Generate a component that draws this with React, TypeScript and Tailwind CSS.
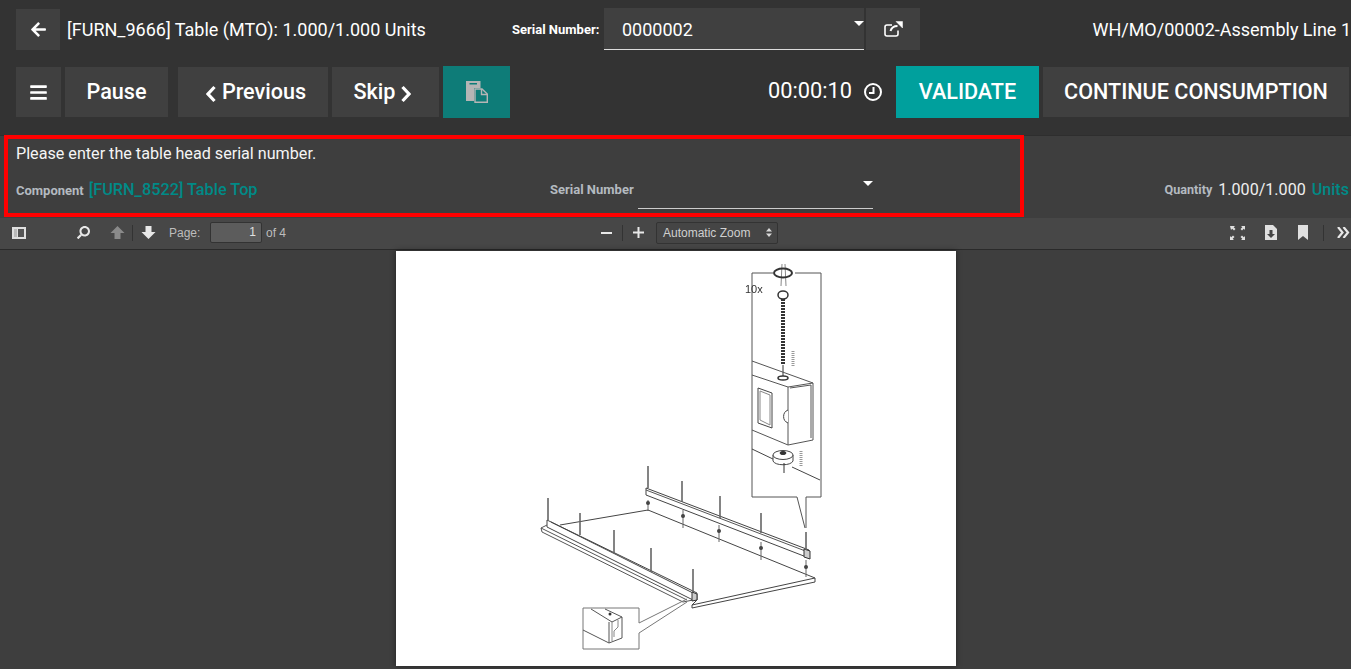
import { FaArrowLeft, FaBars, FaSearch } from "react-icons/fa";

const btn = "flex items-center justify-center bg-[#404040] text-white text-[21.6px] font-medium h-[50px]";

function Caret() {
  return <span className="block w-0 h-0 border-x-[5px] border-x-transparent border-t-[5px] border-t-white" />;
}

function Chevron({ right }: { right?: boolean }) {
  return (
    <svg width="11" height="18" viewBox="0 0 11 18" fill="none" stroke="white" strokeWidth="3.2" className="mt-[3px]">
      <path d={right ? "M2.500 2L9 9 2.500 16" : "M8.500 2L2 9 8.500 16"} />
    </svg>
  );
}

function ManualDrawing() {
  return (
    <svg viewBox="396 251 560 415" className="w-[560px] h-[415px] block blur-[0.3px]" fill="none" stroke="#333" strokeWidth="1">
      {/* detail box */}
      <path d="M773 273H752V497H797L805 528M795 273H821V497H806V528" stroke="#555" />
      <text x="745" y="293" fontSize="11" fill="#333" stroke="none" fontFamily="Liberation Sans, sans-serif">10x</text>
      <path d="M782 264L781 286M785 264L786 286" stroke="#888" />
      <ellipse cx="783" cy="273" rx="9" ry="4.500" strokeWidth="2" />
      <ellipse cx="783" cy="295" rx="5" ry="4" strokeWidth="1.500" />
      <path d="M783 299V365" stroke="#333" strokeWidth="4" strokeDasharray="2 1" />
      <path d="M783 365V376" />
      <ellipse cx="783" cy="378" rx="5" ry="2" strokeWidth="1.500" />
      {/* tube section */}
      <path d="M752 361L813 383V440L788 445V387L752 375M788 387L813 383M752 430L788 445M790 388L811 385V438" stroke="#555" strokeWidth="1" />
      <path d="M788 410A7 7 0 0 0 788 423" fill="#fff" stroke="#444" strokeWidth="1" />
      <path d="M758 388L772 393V428L758 423Z" stroke="#444" strokeWidth="1" />
      <path d="M760 391L770 395V425L760 420Z" stroke="#888" />
      <path d="M752 449L775 460M792 467L820 480" stroke="#444" />
      <path d="M773 455V461C775 466 791 466 793 461V455" fill="#fff" stroke="#444" />
      <ellipse cx="783" cy="455" rx="10" ry="4.500" fill="#fff" stroke="#444" />
      <ellipse cx="783" cy="453" rx="3" ry="1.500" fill="#333" />
      <path d="M784 463V473" />
      <path d="M793 351V366M801 451V466" stroke="#999" strokeWidth="3" strokeDasharray="1 1" />
      {/* table top */}
      <path d="M560 525L648 510 815 578V582L692 608V605L815 578M692 605L697 600M648 510V511" stroke="#444" />
      {/* far rail */}
      <path d="M646 488L809 550V558L646 495Z" stroke="#444" strokeWidth="1" />
      <path d="M646 490L808 552" stroke="#555" strokeWidth="1" />
      <path d="M804 549L810 551V559L804 557Z" fill="#ccc" />
      {/* near rail */}
      <path d="M547 520L697 593V600L693 600 547 527ZM551 522L695 594" stroke="#444" strokeWidth="1" />
      <path d="M547 525L541 528 542 532 683 602 693 600M541 528L687 600" stroke="#555" />
      <path d="M692 592L697 594V600L692 601Z" fill="#ccc" />
      {/* bolts */}
      <g stroke="#666" strokeWidth="1.600">
        <path d="M548 498V520M580 513V535M614 530V553M651 548V572M693 569V592" />
        <path d="M648 466V488M682 481V502M720 496V518M761 513V533M806 532V550" />
        <path d="M648 500V511M683 510V528M719 525V542M761 542V560M806 560V577" strokeWidth="1" />
      </g>
      <g fill="#444" stroke="none">
        <circle cx="648" cy="503" r="2" />
        <circle cx="683" cy="516" r="2" />
        <circle cx="719" cy="531" r="2" />
        <circle cx="761" cy="548" r="2" />
        <circle cx="806" cy="567" r="2" />
      </g>
      {/* corner detail */}
      <path d="M639 623V608H583V649H639V633L687 602M639 623L687 599" stroke="#777" />
      <path d="M591 609L612 622 622 617V638L609 643V622M605 609L622 617M583 630L609 643" stroke="#555" />
      <path d="M612 622V641M618 620V627L614 631V637" stroke="#888" />
      <circle cx="610" cy="614" r="1.500" fill="#333" stroke="none" />
    </svg>
  );
}

export default function App() {
  return (
    <div className="w-[1351px] h-[669px] overflow-hidden flex flex-col bg-[#333333] text-white font-['Roboto',sans-serif] relative">
      <header className="h-[135px] shrink-0 pl-4 pr-[2px] pt-2">
        <div className="h-[42px] flex items-center">
          <button className="w-[44px] h-[41px] bg-[#404040] flex items-center justify-center">
            <FaArrowLeft size={17} />
          </button>
          <span className="ml-[7px] pt-[1px] text-[18px] w-[445px] whitespace-nowrap">[FURN_9666] Table (MTO): 1.000/1.000 Units</span>
          <span className="pt-[1px] text-[13px] font-bold w-[92px] whitespace-nowrap">Serial Number:</span>
          <div className="relative w-[260px] h-[42px] bg-[#404040] border-b border-[#dddddd] pl-[18px] pt-[1px] flex items-center text-[18px]">
            0000002
            <span className="absolute right-0 top-[13px]"><Caret /></span>
          </div>
          <button className="ml-[2px] w-[54px] h-[42px] bg-[#404040] flex items-center justify-center">
            <svg width="19" height="16" viewBox="0 0 19 16" fill="none" stroke="white">
              <path d="M14 9.500V13a2 2 0 0 1-2 2H3a2 2 0 0 1-2-2V6a2 2 0 0 1 2-2h5" strokeWidth="1.600" />
              <path d="M6.500 10C7.500 6.500 10 5 13.500 5" strokeWidth="2" />
              <path d="M12 .5H18.500V7Z" fill="white" strokeWidth="0.500" />
            </svg>
          </button>
          <span className="ml-auto -mr-[2px] pt-[1px] text-[18px] whitespace-nowrap">WH/MO/00002-Assembly Line 1</span>
        </div>
        <div className="h-[52px] mt-4 flex items-center">
          <button className={`${btn} w-[45px]`}><FaBars size={19} /></button>
          <button className={`${btn} ml-1 w-[103px]`}>Pause</button>
          <button className={`${btn} ml-[10px] w-[150px] gap-[5px] pl-[6px]`}><Chevron />Previous</button>
          <button className={`${btn} ml-1 w-[107px] gap-[5px] pr-[6px]`}>Skip<Chevron right /></button>
          <button className="ml-1 w-[67px] h-[52px] bg-[#0e7c78] flex items-center justify-center">
            <svg width="22" height="22" viewBox="0 0 22 22" fill="none">
              <path d="M0 0H14.500V7H8V20H0Z" fill="#b5b5b5" />
              <path d="M3.500 2H11V3.500H3.500Z" fill="#0e7c78" />
              <path d="M9 8H16L21.300 13V21.300H9Z" stroke="#b5b5b5" strokeWidth="1.400" />
              <path d="M15.500 8V13.500H21" stroke="#b5b5b5" strokeWidth="1.400" />
            </svg>
          </button>
          <span className="ml-auto text-[21.8px] whitespace-nowrap pb-[1px]">00:00:10</span>
          <svg className="ml-[11px]" width="20" height="20" viewBox="0 0 20 20" fill="none" stroke="white">
            <circle cx="10" cy="10" r="8" strokeWidth="2" />
            <path d="M10.500 5V11H6" strokeWidth="2" />
          </svg>
          <button className="ml-[13px] w-[143px] h-[52px] bg-[#00a09d] text-[21.6px] font-medium flex items-center justify-center">VALIDATE</button>
          <button className={`${btn} ml-1 w-[306px]`}>CONTINUE CONSUMPTION</button>
        </div>
      </header>

      <section className="h-[83px] shrink-0 bg-[#3e3e3e] border-t border-[#2e2e2e] pl-4 pr-[2px] pt-[8px]">
        <p className="text-[16.15px] leading-[19px] text-[#f5f5f5]">Please enter the table head serial number.</p>
        <div className="flex items-start mt-[15px]">
          <div className="w-[534px] h-[24px] flex items-center gap-[5px]">
            <span className="text-[13px] font-bold text-[#b4bac0] pt-[1px]">Component</span>
            <span className="text-[16.3px] font-medium text-[#008a87]">[FURN_8522] Table Top</span>
          </div>
          <div className="h-[24px] flex items-center">
            <span className="text-[13px] font-bold text-[#b4bac0]">Serial Number</span>
          </div>
          <div className="relative ml-1 w-[235px] h-[38px] -mt-[7px] border-b border-[#cccccc]">
            <span className="absolute right-0 top-[10px]"><Caret /></span>
          </div>
          <div className="ml-auto h-[24px] flex items-center gap-[5px] whitespace-nowrap">
            <span className="text-[12.6px] font-bold text-[#b4bac0] pt-[1px]">Quantity</span>
            <span className="text-[16.1px] text-[#eeeeee] ml-[1px]">1.000/1.000</span>
            <span className="text-[16.1px] font-medium text-[#008a87] ml-[1px]">Units</span>
          </div>
        </div>
      </section>

      <div className="h-[32px] shrink-0 bg-[#474747] border-b border-[#2a2a2a] pb-[2px] flex items-center text-[#d9d9d9] text-[12px] font-['Liberation_Sans',sans-serif]">
        <svg className="ml-3 shrink-0" width="14" height="14" viewBox="0 0 14 14">
          <path d="M0 1h14v12H0Z" fill="#e0e0e0" />
          <path d="M2 3h3v8H2ZM6 3h6v8H6Z" fill="#555" />
          <path d="M2 3h3v8H2Z" fill="#bbb" />
        </svg>
        <FaSearch className="ml-[51px] -scale-x-100 shrink-0" size={13} color="#e8e8e8" />
        <svg className="ml-[20px] shrink-0" width="15" height="15" viewBox="0 0 15 15"><path d="M7.500 1L14.500 8H10.500V14H4.500V8H.5Z" fill="#8a8a8a" /></svg>
        <span className="ml-[7px] w-px h-[16px] bg-[#333]" />
        <svg className="ml-[8px] shrink-0" width="15" height="15" viewBox="0 0 15 15"><path d="M7.500 14L14.500 7H10.500V1H4.500V7H.5Z" fill="#e8e8e8" /></svg>
        <span className="ml-[13px] w-[31px] text-[#bdbdbd] whitespace-nowrap">Page:</span>
        <span className="ml-[10px] w-[52px] h-[21px] bg-[#5c5c5c] border border-[#333] rounded-[2px] text-right pr-[5px] leading-[19px] text-[#e0e0e0]">1</span>
        <span className="ml-[4px] text-[#bdbdbd]">of 4</span>
        <span className="ml-[315px] w-[11px] h-[2px] bg-[#e8e8e8]" />
        <span className="ml-[10px] w-px h-[16px] bg-[#333]" />
        <svg className="ml-[10px] shrink-0" width="11" height="11" viewBox="0 0 11 11"><path d="M4.500 0h2v4.500H11v2H6.500V11h-2V6.500H0v-2h4.500Z" fill="#e8e8e8" /></svg>
        <div className="ml-[12px] w-[122px] h-[22px] bg-[#454545] border border-[#333] rounded-[2px] flex items-center pl-[6px] text-[#d0d0d0] shrink-0">
          Automatic Zoom
          <svg className="ml-auto mr-[5px]" width="6" height="9" viewBox="0 0 6 9"><path d="M3 0L6 3.500H0ZM3 9L0 5.500H6Z" fill="#d9d9d9" /></svg>
        </div>
        <svg className="ml-[452px] shrink-0" width="15" height="14" viewBox="0 0 15 14" fill="#e0e0e0">
          <path d="M0 0h5L3.700 1.300 5.500 3 4 4.500 2.200 2.700 1 4ZM15 0v4L13.800 2.700 12 4.500 10.500 3 12.300 1.300 11 0ZM0 14v-4l1.200 1.300L3 9.500 4.500 11 2.700 12.700 4 14ZM15 14h-4l1.300-1.300L10.500 11 12 9.500l1.800 1.800L15 10Z" />
        </svg>
        <svg className="ml-[19px] shrink-0" width="14" height="15" viewBox="0 0 14 15"><path d="M1 0h8l4 4v11H1Z" fill="#e0e0e0" /><path d="M5.500 5h3v4H11l-4 4-4-4h2.500Z" fill="#444" /></svg>
        <svg className="ml-[20px] shrink-0" width="10" height="15" viewBox="0 0 10 15"><path d="M0 0h10v15L5 11 0 15Z" fill="#e0e0e0" /></svg>
        <span className="ml-[15px] w-px h-[16px] bg-[#333]" />
        <svg className="ml-[13px] shrink-0" width="13" height="11" viewBox="0 0 13 11" fill="none" stroke="#e8e8e8" strokeWidth="2.200"><path d="M1 0L5.500 5.500 1 11M6.500 0L11 5.500 6.500 11" /></svg>
      </div>

      <main className="flex-1 min-h-0 bg-[#3e3e3e] flex justify-center pt-[1px]">
        <div className="w-[560px] h-[415px] bg-white shadow-[0_0_6px_rgba(0,0,0,0.45)] shrink-0">
          <ManualDrawing />
        </div>
      </main>

      {/* highlight box drawn over the panel */}
      <div className="absolute left-[4px] top-[135px] w-[1020px] h-[82px] border-[4px] border-[#ff0000] pointer-events-none" />
    </div>
  );
}
